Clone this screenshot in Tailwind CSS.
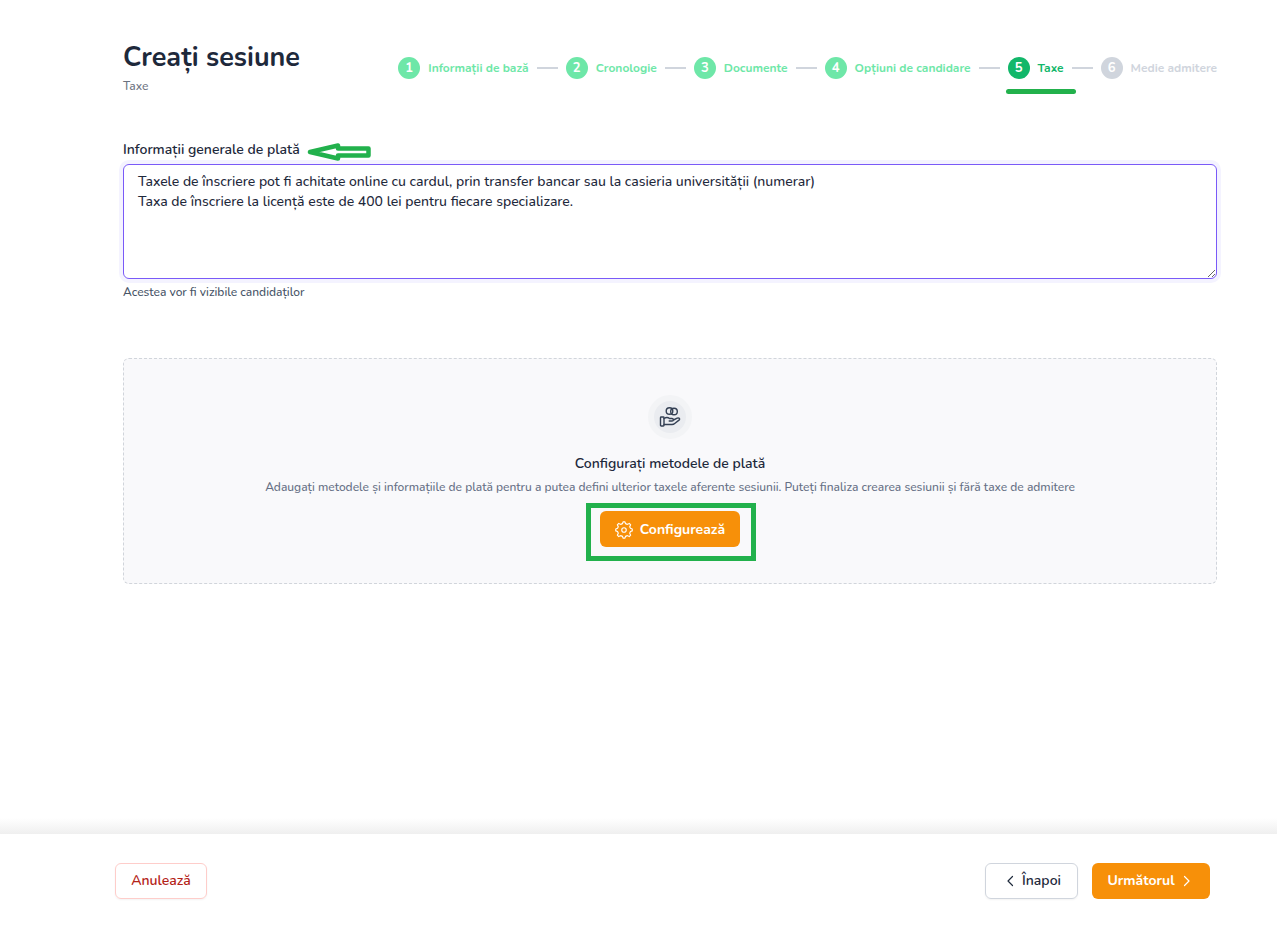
<!DOCTYPE html>
<html lang="ro">
<head>
<meta charset="utf-8">
<meta name="viewport" content="width=device-width, initial-scale=1">
<title>Creați sesiune</title>
<script src="https://cdn.jsdelivr.net/npm/@tailwindcss/browser@4"></script>
</head>
<body class="flex min-h-screen flex-col bg-white font-[Nunito,'Open_Sans',sans-serif] text-sm text-[#1e293b]">
<main class="flex-1 pt-10 pr-15 pl-[123px]">
  <header class="flex items-start justify-between">
    <div>
      <h1 class="pt-0.5 text-[27px] leading-8 font-bold whitespace-nowrap">Creați sesiune</h1>
      <p class="mt-0.5 text-xs leading-5 font-medium text-[#6b7280]">Taxe</p>
    </div>
    <ol class="mt-[17px] flex items-center gap-2 text-xs leading-5 font-bold whitespace-nowrap text-[#6ee7a8]">
      <li class="flex items-center gap-2"><span class="grid size-[22px] place-items-center rounded-full bg-[#6ee7a8] text-[13px] text-white">1</span><span>Informații de bază</span></li>
      <li aria-hidden="true" class="h-0.5 w-[21px] bg-[#d0d5dd]"></li>
      <li class="flex items-center gap-2"><span class="grid size-[22px] place-items-center rounded-full bg-[#6ee7a8] text-[13px] text-white">2</span><span>Cronologie</span></li>
      <li aria-hidden="true" class="h-0.5 w-[21px] bg-[#d0d5dd]"></li>
      <li class="flex items-center gap-2"><span class="grid size-[22px] place-items-center rounded-full bg-[#6ee7a8] text-[13px] text-white">3</span><span>Documente</span></li>
      <li aria-hidden="true" class="h-0.5 w-[21px] bg-[#d0d5dd]"></li>
      <li class="flex items-center gap-2"><span class="grid size-[22px] place-items-center rounded-full bg-[#6ee7a8] text-[13px] text-white">4</span><span>Opțiuni de candidare</span></li>
      <li aria-hidden="true" class="h-0.5 w-[21px] bg-[#d0d5dd]"></li>
      <li aria-current="step" class="relative flex items-center gap-2 text-[#12b76a]"><span class="grid size-[22px] place-items-center rounded-full bg-[#12b76a] text-[13px] text-white">5</span><span>Taxe</span><span class="absolute top-8 -right-3 -left-0.5 h-[5px] rounded-full bg-[#22b14c]"></span></li>
      <li aria-hidden="true" class="h-0.5 w-[21px] bg-[#d0d5dd]"></li>
      <li class="flex items-center gap-2 text-[#d0d5dd]"><span class="grid size-[22px] place-items-center rounded-full bg-[#d0d5dd] text-[13px] text-white">6</span><span>Medie admitere</span></li>
    </ol>
  </header>
  <section class="mt-11">
    <div class="flex h-5 items-center gap-[7px]">
      <label for="info" class="text-sm leading-5 font-semibold">Informații generale de plată</label>
      <svg class="mt-1 h-[18px] w-16" viewBox="0 0 64 18" aria-hidden="true"><path d="M3 9 31 2.500V5.500H61.500V12.500H31V15.500Z" fill="#fff" stroke="#22b14c" stroke-width="4.500" stroke-linejoin="round"/></svg>
    </div>
    <textarea id="info" class="mt-1 block h-[115px] w-full resize-y rounded-md border border-[#7a5af8] px-3.5 py-[7px] text-sm leading-5 font-medium shadow-[0_0_0_4px_#f4f3ff] outline-none">Taxele de înscriere pot fi achitate online cu cardul, prin transfer bancar sau la casieria universității (numerar)
Taxa de înscriere la licență este de 400 lei pentru fiecare specializare.</textarea>
    <p class="mt-1 text-xs leading-[18px] font-medium text-[#475467]">Acestea vor fi vizibile candidaților</p>
  </section>
  <section class="mt-[57px] flex flex-col items-center rounded-md border border-dashed border-[#d1d5db] bg-[#f9f9fb] pt-9 pb-[22px] text-center">
    <div class="grid size-11 place-items-center rounded-full border-[6px] border-[#f3f4f6] bg-[#eaecf0]">
      <svg class="size-[22px]" viewBox="0 0 22 22" fill="none" stroke="#344054" stroke-width="1.400" stroke-linecap="round" stroke-linejoin="round" aria-hidden="true"><rect x="1.500" y="11" width="3.500" height="9" rx=".7"/><path d="M5 12.500c2-1.300 4-1.300 5.500 0h2.500c1.800 0 1.800 2.500 0 2.500h-2.800M14.500 14l3.700-1.800c1.700-.8 3.300.6 1.800 1.900l-4.300 3.400c-.8.7-1.600 1-2.700 1H5"/><circle cx="10.500" cy="5" r="3.300"/><circle cx="15" cy="5.500" r="3.300"/></svg>
    </div>
    <h2 class="mt-[15px] text-sm leading-5 font-semibold">Configurați metodele de plată</h2>
    <p class="mt-[3px] text-xs leading-5 font-medium text-[#667085]">Adaugați metodele și informațiile de plată pentru a putea defini ulterior taxele aferente sesiunii. Puteți finaliza crearea sesiunii și fără taxe de admitere</p>
    <div class="mt-1.5 ml-0.5 border-[5px] border-[#22b14c] pt-[3px] pr-[11px] pb-[9px] pl-[9px]">
      <button type="button" class="flex h-9 w-[140px] items-center justify-center gap-[7px] rounded-md bg-[#f79009] pt-px text-sm font-bold text-white">
        <svg class="size-[18px]" viewBox="0 0 24 24" fill="none" stroke="currentColor" stroke-width="1.500" stroke-linecap="round" stroke-linejoin="round" aria-hidden="true"><circle cx="12" cy="12" r="3"/><path d="M10 3.500 10.700 1.100h2.600L14 3.500l2.500 1 2.500-1.300 1.900 1.900-1.300 2.500 1 2.100 2.400.9v2.600l-2.400.9-1 2.300 1.300 2.500-1.900 1.900-2.500-1.300-2.500 1-.7 2.300h-2.600l-.7-2.300-2.500-1-2.500 1.300-1.900-1.900 1.300-2.500-1-2.300-2.400-.9v-2.600l2.400-.9 1-2.100-1.300-2.500 1.900-1.900 2.500 1.300Z"/></svg>
        Configurează
      </button>
    </div>
  </section>
</main>
<div class="h-4 bg-linear-to-b from-white to-[#efefef]"></div>
<footer class="flex h-[92px] items-center justify-between bg-white pt-px pr-[67px] pl-[115px] text-sm font-semibold">
  <button type="button" class="h-9 w-[92px] rounded-md border border-[#fecdca] text-[#b42318] shadow-xs">Anulează</button>
  <div class="flex gap-3.5">
    <button type="button" class="flex h-9 w-[93px] items-center justify-center gap-2 rounded-md border border-[#d0d5dd] pl-1 shadow-xs">
      <svg class="h-3 w-2" viewBox="0 0 8 12" fill="none" stroke="currentColor" stroke-width="1.200" stroke-linecap="round" stroke-linejoin="round" aria-hidden="true"><path d="M6.500 1.500 2 6l4.500 4.500"/></svg>Înapoi
    </button>
    <button type="button" class="flex h-9 w-[118px] items-center justify-center gap-2 rounded-md bg-[#f79009] pr-1 font-bold text-white">
      Următorul<svg class="h-3 w-2" viewBox="0 0 8 12" fill="none" stroke="currentColor" stroke-width="1.200" stroke-linecap="round" stroke-linejoin="round" aria-hidden="true"><path d="M1.500 1.500 6 6l-4.500 4.500"/></svg>
    </button>
  </div>
</footer>
</body>
</html>
